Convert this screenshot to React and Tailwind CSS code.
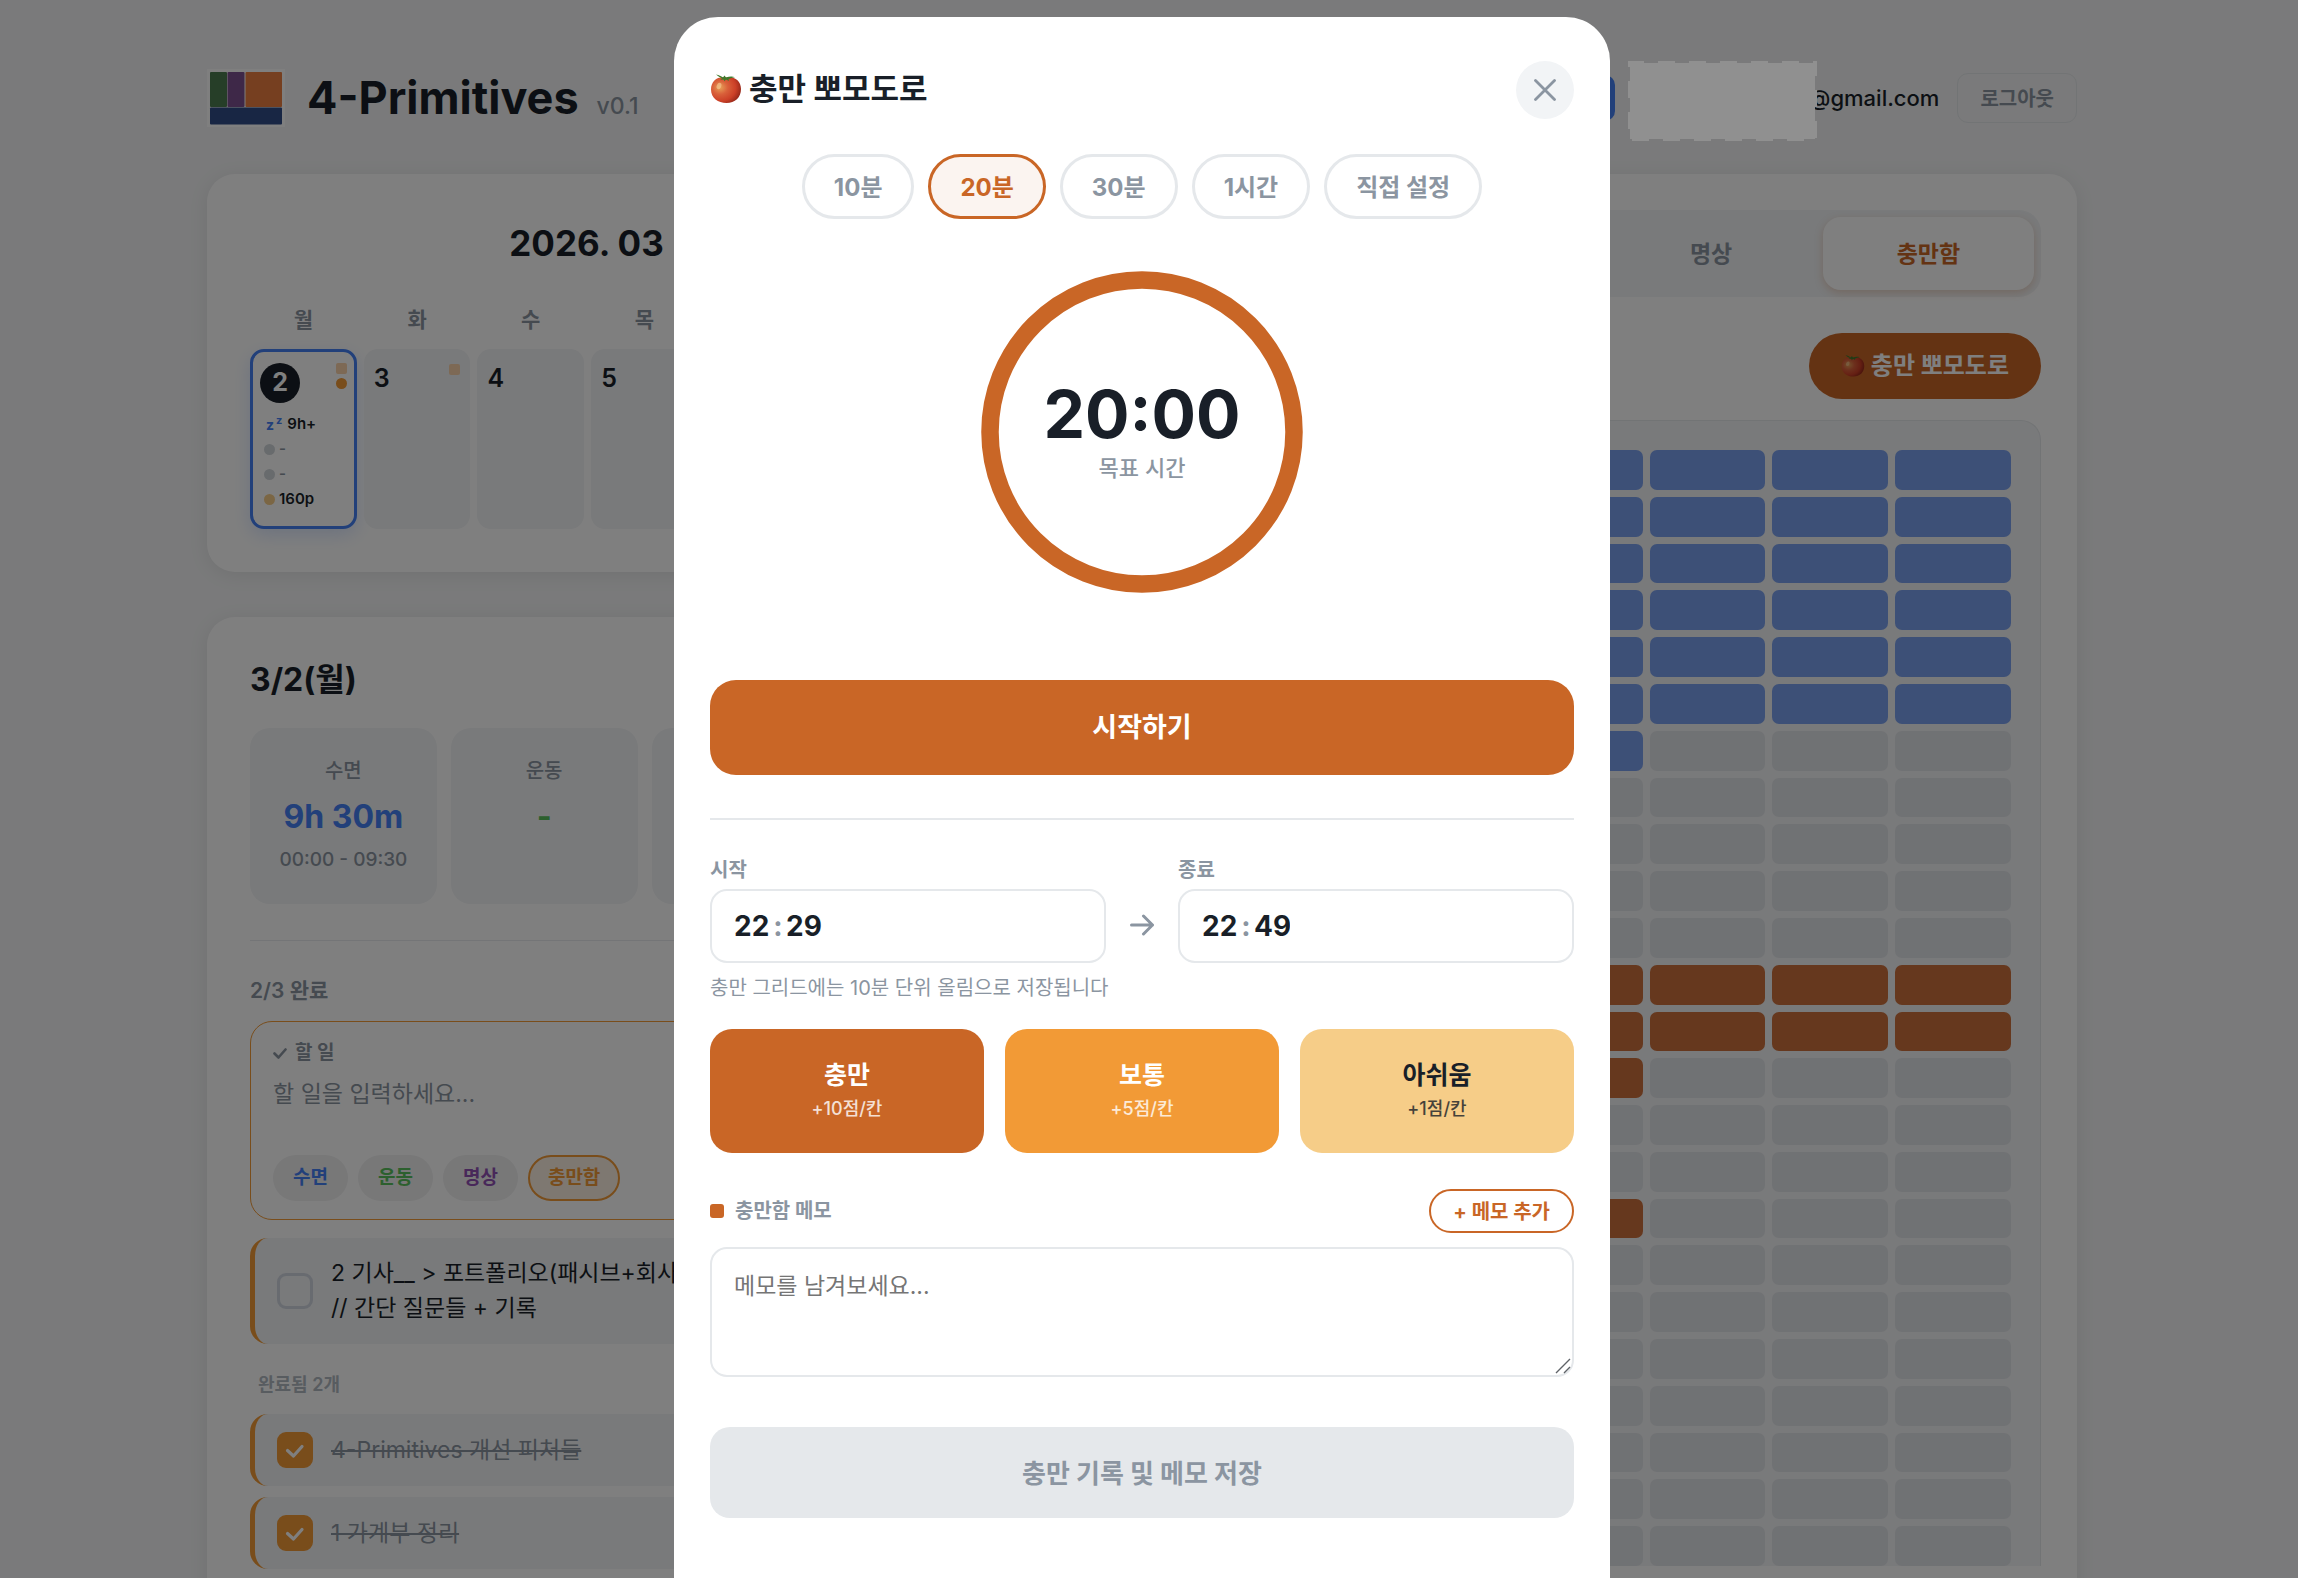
import React from "react";

const FONT =
  "font-['Inter','Noto_Sans_CJK_KR',sans-serif]";

function Tomato({ className }) {
  return (
    <svg viewBox="0 0 32 32" className={className} aria-hidden="true">
      <defs>
        <radialGradient id="tomatoBody" cx="0.3" cy="0.4" r="0.75">
          <stop offset="0" stopColor="#e8a057" />
          <stop offset="0.35" stopColor="#d9603a" />
          <stop offset="0.7" stopColor="#cc4027" />
          <stop offset="1" stopColor="#8e2417" />
        </radialGradient>
      </defs>
      <path
        d="M16 4.5C8 2.8 1 7.500 1 16.500 1 25 8 30 16.500 30S31 24.500 31 16C31 7.500 24 3 16 4.500Z"
        fill="url(#tomatoBody)"
      />
      <path
        d="M6 1.500C9 2 11 3 13 4.500L14.500 2.500 16 4.600C19 3.500 22 3.200 25 4.200 22.500 4.600 20.500 5.200 18.500 6.200L19 8 16 6.400 14.500 8.200 13.500 6.400 10 6.800 12 5.400C10 4.400 8 3.200 6 1.500Z"
        fill="#3f7a2b"
      />
      <ellipse cx="9" cy="13" rx="2.200" ry="3.200" fill="#f6cf9a" opacity="0.6" transform="rotate(25 9 13)" />
    </svg>
  );
}

function Logo() {
  return (
    <svg viewBox="0 0 78 58" className="h-[58px] w-[78px]" role="img" aria-label="4-Primitives">
      <rect width="78" height="58" fill="#ffffff" />
      <rect x="3" y="3" width="17" height="35" rx="1" fill="#4c7d50" />
      <rect x="20.500" y="3" width="17" height="35" rx="1" fill="#7d5090" />
      <rect x="38.500" y="3" width="36.500" height="35" rx="1" fill="#ec7e40" />
      <rect x="3" y="38.500" width="72" height="17" rx="1" fill="#304c88" />
    </svg>
  );
}

function Header() {
  return (
    <header className="flex items-center justify-between">
      <div className="flex items-center gap-[22px]">
        <Logo />
        <div className="flex items-baseline gap-[18px]">
          <h1 className="text-[45px] leading-[58px] font-bold">4-Primitives</h1>
          <span className="text-[23px] font-medium text-[#8b95a1]">v0.1</span>
        </div>
      </div>
      <div className="flex items-center">
        <button type="button" aria-label="프로필" className="mr-[13px] h-[46px] w-12 rounded-[10px] bg-[#4480f5]" />
        <div className="relative z-30 h-10 w-[181px]">
          <svg viewBox="0 0 189 80" className="absolute -top-[17px] left-0 h-20 w-[189px]" aria-hidden="true">
            <rect x="2" y="2" width="185" height="76" fill="#909090" />
            <rect x="1" y="1" width="187" height="78" fill="none" stroke="#909090" strokeWidth="2" strokeDasharray="17 14" strokeDashoffset="2" />
          </svg>
        </div>
        <span className="text-[22px] font-medium">@gmail.com</span>
        <button type="button" className="ml-[18px] h-[50px] rounded-[11px] border border-[#e5e8eb] px-[22px] pt-[2px] text-[20px] font-semibold text-[#8b95a1]">
          로그아웃
        </button>
      </div>
    </header>
  );
}

const WEEKDAYS = ["월", "화", "수", "목", "금", "토", "일"];

function DayStat({ color, text, muted }) {
  return (
    <li className="flex h-[25px] items-center gap-1">
      <span className={`size-[11px] rounded-full ${color}`} />
      <span className={muted ? "text-[#8b95a1]" : ""}>{text}</span>
    </li>
  );
}

function Calendar() {
  return (
    <section className="rounded-[28px] bg-white px-[43px] pt-[47px] pb-[43px] shadow-[0_3px_20px_rgba(0,0,0,0.08)]">
      <div className="flex items-center justify-center gap-4">
        <h2 className="text-[35px] leading-[44px] font-bold">2026. 03</h2>
        <button type="button" className="h-10 w-[100px] rounded-full bg-[#f2f4f6] text-[20px] font-semibold text-[#8b95a1]">
          오늘
        </button>
      </div>
      <div className="mt-10 grid grid-cols-7 gap-x-[7px] text-center text-[21px] leading-[30px] font-semibold text-[#8b95a1]">
        {WEEKDAYS.map((d) => (
          <div key={d}>{d}</div>
        ))}
      </div>
      <div className="mt-[14px] grid grid-cols-7 gap-x-[7px]">
        <div className="h-[180px] rounded-[14px] border-[3px] border-[#4480f5] bg-white px-[7px] pt-[11px] shadow-[0_6px_18px_rgba(68,128,245,0.2)]">
          <div className="flex items-start justify-between">
            <span className="grid size-10 place-items-center rounded-full bg-[#191f28] text-[25px] font-bold text-white">2</span>
            <span className="flex flex-col gap-1">
              <span className="size-[11px] rounded-[2px] bg-[#fbd3ab]" />
              <span className="size-[11px] rounded-full bg-[#f29a36]" />
            </span>
          </div>
          <ul className="mt-[9px] pl-1 text-[15px] font-semibold">
            <li className="flex h-[25px] items-center gap-[5px]">
              <span className="flex items-center gap-[2px] pl-[2px] font-bold text-[#4480f5]">
                <span className="text-[14px]">z</span>
                <span className="pb-2 text-[11px]">z</span>
              </span>
              9h+
            </li>
            <DayStat color="bg-[#d1d6db]" text="-" muted />
            <DayStat color="bg-[#d1d6db]" text="-" muted />
            <DayStat color="bg-[#f7cd88]" text="160p" />
          </ul>
        </div>
        {[3, 4, 5, 6, 7, 8].map((n) => (
          <div key={n} className="flex h-[180px] items-start justify-between rounded-[14px] bg-[#f2f4f6] px-[10px] pt-[14px]">
            <span className="text-[25px] leading-[30px] font-semibold">{n}</span>
            {n === 3 && <span className="mt-px size-[11px] rounded-[2px] bg-[#fbd3ab]" />}
          </div>
        ))}
      </div>
    </section>
  );
}

function Stat({ label, value, color, sub }) {
  return (
    <div className="h-[176px] rounded-[20px] bg-[#f2f4f6] pt-[28px] text-center">
      <div className="text-[20px] leading-[30px] font-medium text-[#8b95a1]">{label}</div>
      <div className={`mt-[11px] text-[32px] leading-[40px] font-bold ${color}`}>{value}</div>
      <div className="mt-[8px] text-[19px] leading-[30px] font-medium text-[#8b95a1]">{sub}</div>
    </div>
  );
}

function Todo({ id, checked, children }) {
  return (
    <li className="flex min-h-[72px] items-center gap-[18px] rounded-[18px] border-l-[5px] border-[#f29a36] bg-[#f2f4f6] py-[18px] pr-6 pl-[22px]">
      <span className="relative grid size-9 shrink-0 place-items-center">
        <input
          id={id}
          type="checkbox"
          defaultChecked={checked}
          className="size-9 appearance-none rounded-[9px] border-[3px] border-[#d1d6e0] checked:border-[#f29a36] checked:bg-[#f29a36]"
        />
        {checked && (
          <svg viewBox="0 0 36 36" className="pointer-events-none absolute inset-0 size-9" aria-hidden="true">
            <path d="M10.500 18.500l6 5.500 8.500-9.500" fill="none" stroke="#fff" strokeWidth="3.200" strokeLinecap="round" strokeLinejoin="round" />
          </svg>
        )}
      </span>
      <label
        htmlFor={id}
        className={`text-[23px] leading-[35px] whitespace-nowrap ${checked ? "text-[#8b95a1] line-through" : ""}`}
      >
        {children}
      </label>
    </li>
  );
}

const CHIP = "h-[46px] rounded-full px-5 text-[19px] font-bold";

function DayPanel() {
  return (
    <section className="rounded-t-[28px] bg-white px-[43px] pt-[41px] pb-10 shadow-[0_3px_20px_rgba(0,0,0,0.08)]">
      <h2 className="text-[32px] leading-[44px] font-bold">3/2(월)</h2>
      <div className="mt-[26px] grid grid-cols-4 gap-[14px]">
        <Stat label="수면" value="9h 30m" color="text-[#4480f5]" sub="00:00 - 09:30" />
        <Stat label="운동" value="-" color="text-[#58c05c]" />
        <Stat label="명상" value="-" color="text-[#9050b4]" />
        <Stat label="충만함" value="160p" color="text-[#c96626]" />
      </div>
      <hr className="mt-9 border-[#e9ebee]" />
      <p className="mt-[35px] w-fit text-[21px] leading-[30px] font-semibold text-[#8b95a1]">2/3 완료</p>
      <div className="mt-[15px] rounded-[22px] border border-[#f29a36] px-[22px] pt-[17px] pb-[18px]">
        <label htmlFor="todo" className="flex w-fit items-center gap-2 text-[19px] leading-[28px] font-bold text-[#8b95a1]">
          <svg viewBox="0 0 14 11" className="h-[11px] w-[14px]" aria-hidden="true">
            <path d="M1.500 5.500l4 4L12.500 1.500" fill="none" stroke="currentColor" strokeWidth="2.600" strokeLinecap="round" strokeLinejoin="round" />
          </svg>
          할 일
        </label>
        <textarea
          id="todo"
          placeholder="할 일을 입력하세요..."
          className="mt-[10px] block h-[65px] w-full resize-none text-[23px] leading-[35px] outline-none placeholder:text-[#8b95a1]"
        />
        <div className="mt-[13px] flex gap-[10px]">
          <button type="button" className={`${CHIP} bg-[#f0f0f1] text-[#4480f5]`}>수면</button>
          <button type="button" className={`${CHIP} bg-[#f0f0f1] text-[#58c05c]`}>운동</button>
          <button type="button" className={`${CHIP} bg-[#f0f0f1] text-[#9050b4]`}>명상</button>
          <button type="button" className="h-[46px] rounded-full border-2 border-[#f29a36] bg-[#fdf0e3] px-[18px] text-[19px] font-bold text-[#f29a36]">
            충만함
          </button>
        </div>
      </div>
      <ul className="mt-[18px]">
        <Todo id="t1">
          2 기사__ &gt; 포트폴리오(패시브+회사)
          <br />
          // 간단 질문들 + 기록
        </Todo>
      </ul>
      <p className="mt-[27px] mb-[15px] w-fit pl-2 text-[18px] leading-[28px] font-semibold text-[#b0b8c1]">완료됨 2개</p>
      <ul className="flex flex-col gap-[11px]">
        <Todo id="t2" checked>4-Primitives 개선 피처들</Todo>
        <Todo id="t3" checked>1 가계부 정리</Todo>
      </ul>
    </section>
  );
}

const CELL_COLORS = { b: "bg-[#7aa0ee]", o: "bg-[#cc703c]", ".": "bg-[#e1e4e8]" };
const HOURS = [
  "bbbbbb", "bbbbbb", "bbbbbb", "bbbbbb", "bbbbbb", "bbbbbb", "bbb...", "......",
  "......", "......", "......", "oooooo", "oooooo", "ooo...", "......", "......",
  "ooo...", "......", "......", "......", "......", "......", "......", "......",
];

function TimePanel() {
  const tab = "h-[73px] rounded-[18px] pt-[2px] text-[23px] font-bold";
  return (
    <section className="rounded-t-[28px] bg-white px-9 pt-9 shadow-[0_3px_20px_rgba(0,0,0,0.08)]">
      <div className="grid grid-cols-4 gap-[6px] rounded-[22px] bg-[#f2f4f6] p-[7px]">
        <button type="button" className={`${tab} text-[#8b95a1]`}>수면</button>
        <button type="button" className={`${tab} text-[#8b95a1]`}>운동</button>
        <button type="button" className={`${tab} text-[#8b95a1]`}>명상</button>
        <button type="button" className={`${tab} bg-white text-[#c96626] shadow-[0_3px_8px_rgba(201,102,38,0.25)]`}>충만함</button>
      </div>
      <div className="mt-9 flex justify-end">
        <button type="button" className="flex h-[66px] items-center gap-[6px] rounded-full bg-[#c96626] px-8 text-[24px] font-bold text-white">
          <Tomato className="size-6" />
          충만 뽀모도로
        </button>
      </div>
      <div className="mt-[21px] rounded-t-[20px] border border-b-0 border-[#e5e8eb] bg-[#f2f4f6] px-[29px] pt-[29px]">
        <div className="grid h-[1116px] auto-rows-fr gap-y-[7px]">
          {HOURS.map((row, i) => (
            <div key={i} className="grid grid-cols-[80px_repeat(6,1fr)] gap-x-[7px]">
              <span className="w-fit self-center text-[20px] leading-[24px] text-[#8b95a1]">{(i + 3) % 24}시</span>
              {row.split("").map((c, j) => (
                <span key={j} className={`rounded-[7px] ${CELL_COLORS[c]}`} />
              ))}
            </div>
          ))}
        </div>
      </div>
    </section>
  );
}

const PRESETS = ["10분", "20분", "30분", "1시간", "직접 설정"];

function TimeField({ label, name, hour, minute }) {
  const part = "w-9 bg-transparent text-[28px] leading-[40px] font-bold outline-none";
  return (
    <div role="group" aria-label={label} className="min-w-0 flex-1">
      <label htmlFor={`${name}-h`} className="block text-[20px] leading-[30px] font-semibold text-[#8b95a1]">{label}</label>
      <div className="mt-1 flex h-[74px] items-center rounded-[17px] border-2 border-[#e5e8eb] px-[22px]">
        <input id={`${name}-h`} type="text" defaultValue={hour} className={part} />
        <span className="w-4 text-center text-[28px] font-bold text-[#8b95a1]">:</span>
        <input aria-label={`${label} 분`} type="text" defaultValue={minute} className={part} />
      </div>
    </div>
  );
}

function Rating({ title, sub, className }) {
  return (
    <button type="button" className={`h-[124px] flex-1 rounded-[22px] ${className}`}>
      <span className="block text-[25px] leading-[36px] font-bold">{title}</span>
      <span className="block text-[18px] leading-[32px] font-medium opacity-80">{sub}</span>
    </button>
  );
}

function PomodoroModal() {
  return (
    <div className="fixed inset-0 z-20 flex items-start justify-center overflow-hidden bg-black/50 pt-[17px] pr-[14px]">
      <div role="dialog" aria-modal="true" aria-labelledby="modal-title" className="min-h-[calc(100vh+60px)] w-full max-w-[936px] rounded-[44px] bg-white px-9 pt-11">
        <div className="flex items-center justify-between">
          <h2 id="modal-title" className="flex items-center gap-[7px] pb-[3px] text-[31px] leading-[44px] font-bold">
            <Tomato className="size-8" />
            충만 뽀모도로
          </h2>
          <button type="button" aria-label="닫기" className="grid size-[58px] place-items-center rounded-full bg-[#f2f4f6] text-[#8b95a1]">
            <svg viewBox="0 0 22 22" className="size-[22px]" aria-hidden="true">
              <path d="M1.500 1.500l19 19M20.500 1.500l-19 19" stroke="currentColor" strokeWidth="2.800" strokeLinecap="round" />
            </svg>
          </button>
        </div>

        <div className="mt-[35px] flex justify-center gap-[14px]">
          {PRESETS.map((p) => (
            <button
              key={p}
              type="button"
              className={`h-[65px] rounded-full border-[3px] px-[29px] pt-[2px] text-[24px] font-bold ${
                p === "20분" ? "border-[#c96626] bg-[#fbf4f0] text-[#c96626]" : "border-[#e5e8eb] text-[#8b95a1]"
              }`}
            >
              {p}
            </button>
          ))}
        </div>

        <div className="mt-[52px] grid place-items-center">
          <svg viewBox="0 0 322 322" className="col-start-1 row-start-1 size-[322px]" aria-hidden="true">
            <circle cx="161" cy="161" r="152" fill="none" stroke="#c96626" strokeWidth="17.500" />
          </svg>
          <div className="col-start-1 row-start-1 text-center">
            <div className="text-[66px] leading-[72px] font-bold">20:00</div>
            <div className="text-[22px] leading-[36px] font-medium text-[#8b95a1]">목표 시간</div>
          </div>
        </div>

        <button type="button" className="mt-[87px] h-[95px] w-full rounded-[26px] bg-[#c96626] pt-[2px] text-[27px] font-bold text-white">
          시작하기
        </button>

        <hr className="mt-[43px] border-t-2 border-[#e5e8eb]" />

        <div className="mt-[35px] flex items-end">
          <TimeField label="시작" name="start" hour="22" minute="29" />
          <div className="grid h-[74px] w-[72px] place-items-center pb-[3px] text-[#8b95a1]">
            <svg viewBox="0 0 24 22" className="h-[22px] w-6" fill="none" stroke="currentColor" strokeWidth="3" strokeLinecap="round" strokeLinejoin="round" aria-hidden="true">
              <path d="M1.500 11h21M13.500 2l9 9-9 9" />
            </svg>
          </div>
          <TimeField label="종료" name="end" hour="22" minute="49" />
        </div>
        <p className="mt-[10px] w-fit text-[20px] leading-[30px] text-[#8b95a1]">충만 그리드에는 10분 단위 올림으로 저장됩니다</p>

        <div className="mt-[26px] flex gap-[21px]">
          <Rating title="충만" sub="+10점/칸" className="bg-[#c96626] text-white" />
          <Rating title="보통" sub="+5점/칸" className="bg-[#f29a36] text-white" />
          <Rating title="아쉬움" sub="+1점/칸" className="bg-[#f6cd88]" />
        </div>

        <div className="mt-9 flex items-center justify-between">
          <label htmlFor="memo" className="flex items-center gap-[11px] text-[20px] leading-[30px] font-bold text-[#8b95a1]">
            <span className="size-[14px] rounded-[3px] bg-[#c96626]" />
            충만함 메모
          </label>
          <button type="button" className="h-11 rounded-full border-2 border-[#c96626] px-[22px] pt-px text-[20px] font-bold text-[#c96626]">
            + 메모 추가
          </button>
        </div>
        <div className="relative mt-[14px]">
          <textarea
            id="memo"
            placeholder="메모를 남겨보세요..."
            className="block h-[130px] w-full resize-none rounded-[17px] border-2 border-[#e5e8eb] px-[22px] py-[20px] text-[23px] leading-[34px] outline-none placeholder:text-[#757575]"
          />
          <svg viewBox="0 0 16 16" className="pointer-events-none absolute right-[3px] bottom-[3px] size-4" stroke="#5f6368" strokeWidth="1.400" aria-hidden="true">
            <path d="M1 15L15 1M9 15l6-6" />
          </svg>
        </div>
        <button type="button" disabled className="mt-[50px] h-[91px] w-full rounded-[20px] bg-[#e5e8eb] pt-[2px] text-[26px] font-bold text-[#8b95a1]">
          충만 기록 및 메모 저장
        </button>
      </div>
    </div>
  );
}

export default function App() {
  return (
    <div className={`h-screen overflow-hidden bg-[#f4f5f6] pt-[69px] pr-[14px] text-[#191f28] ${FONT}`}>
      <div className="mx-auto w-full max-w-[1870px]">
        <Header />
        <main className="mt-[47px] grid grid-cols-[875fr_949fr] gap-[46px]">
          <div className="flex min-w-0 flex-col gap-[45px]">
            <Calendar />
            <DayPanel />
          </div>
          <TimePanel />
        </main>
      </div>
      <PomodoroModal />
    </div>
  );
}
